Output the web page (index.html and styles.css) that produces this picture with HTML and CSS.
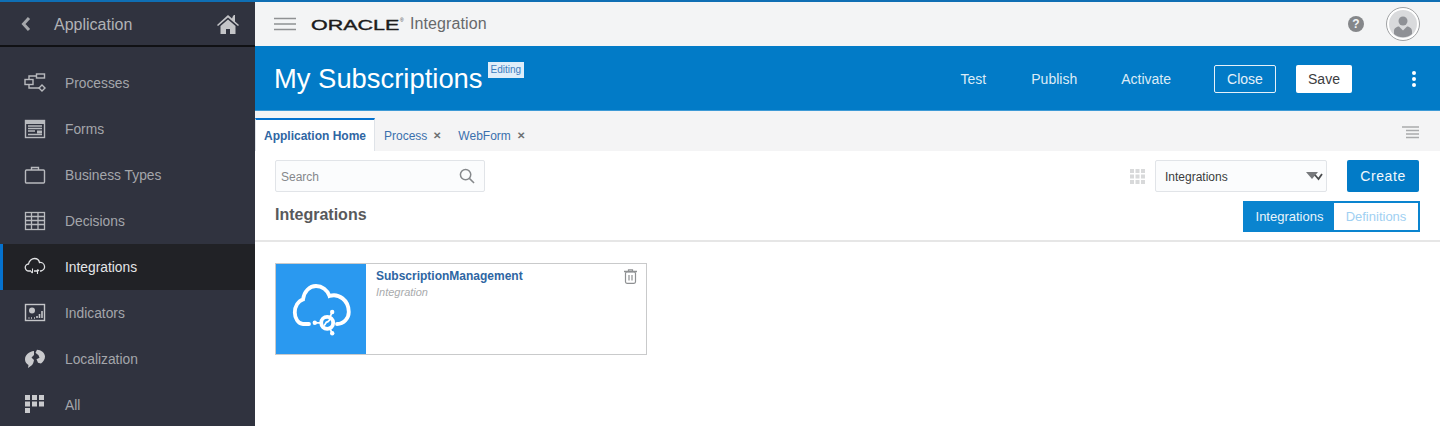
FILE: index.html
```html
<!DOCTYPE html>
<html lang="en">
<head>
<meta charset="utf-8">
<title>My Subscriptions</title>
<link rel="stylesheet" href="styles.css">
</head>
<body>
<div class="app">
  <aside class="side">
    <div class="side-head">
      <svg class="back" width="12" height="16" viewBox="0 0 12 16"><path d="M9 2 3.500 8 9 14" fill="none" stroke="#a5a7ab" stroke-width="3"/></svg>
      <span class="side-title">Application</span>
      <svg class="home" width="24" height="22" viewBox="0 0 24 22"><path d="M12 2 1 12l1 1 10-8.500L22 13l1-1-4-3.600V2h-1l-1 1-1 2.500z" fill="#c4c5c8"/><path d="M4.500 13 12 6.500 19.500 13v8H14v-5h-4v5H4.500z" fill="#c4c5c8"/></svg>
    </div>
    <nav class="nav">
      <a class="nav-item">
        <svg class="nav-ico" width="22" height="20" viewBox="0 0 22 20" fill="none" stroke="#b8babe" stroke-width="1.400"><rect x="12.500" y="1" width="8" height="4"/><rect x="1" y="6.500" width="8" height="5"/><path d="M12.500 3H5v3.500M5 11.500V15h10"/><path d="m18 12 3 3-3 3-3-3z"/></svg>
        <span>Processes</span>
      </a>
      <a class="nav-item">
        <svg class="nav-ico" width="22" height="20" viewBox="0 0 22 20" fill="none" stroke="#b8babe"><rect x="1.500" y="1.500" width="19" height="17" stroke-width="1.400"/><path d="M2 3.500h18" stroke-width="3"/><path d="M4 7h14M4 9.500h14M4 12h7M4 15.500h14" stroke-width="1.700"/><path d="M13 13h5" stroke-width="3"/></svg>
        <span>Forms</span>
      </a>
      <a class="nav-item">
        <svg class="nav-ico" width="22" height="20" viewBox="0 0 22 20" fill="none" stroke="#b8babe" stroke-width="1.400"><rect x="1.500" y="5" width="19" height="13" rx="1"/><path d="M7.500 5V2.500h7V5"/></svg>
        <span>Business Types</span>
      </a>
      <a class="nav-item">
        <svg class="nav-ico" width="22" height="20" viewBox="0 0 22 20" fill="none" stroke="#b8babe" stroke-width="1.300"><rect x="1.500" y="1.500" width="19" height="17"/><path d="M1.500 5.500h19M1.500 9.500h19M1.500 13.500h19M7.500 1.500v17M14 1.500v17"/></svg>
        <span>Decisions</span>
      </a>
      <a class="nav-item active">
        <svg class="nav-ico" width="22" height="20" viewBox="0 0 22 20" fill="none" stroke="#e0e1e3" stroke-width="1.300"><path d="M7 14H5a3.500 3.500 0 0 1-.5-7C5 3.500 8 1.500 10.500 1.500c2.500 0 4.500 1.500 5 4a4.300 4.300 0 0 1 1.500 8.500h-1M10 14h3"/><path d="M8.500 11.500V16M7 14.500l1.500 1.500M13.500 12.500V17M13.500 12.500l1.500 1.500" stroke-width="1.100"/></svg>
        <span>Integrations</span>
      </a>
      <a class="nav-item">
        <svg class="nav-ico" width="22" height="20" viewBox="0 0 22 20" fill="none" stroke="#c4c5c8"><rect x="1.500" y="1.500" width="19" height="16" stroke-width="1.400"/><circle cx="8" cy="7.500" r="3" fill="#c4c5c8" stroke="none"/><path d="M4.500 15h1M7 15h1M10 15h1M13 15v-2M15.500 15v-4M18 15V8" stroke-width="1.600"/></svg>
        <span>Indicators</span>
      </a>
      <a class="nav-item">
        <svg class="nav-ico" width="22" height="20" viewBox="0 0 22 20"><path d="M10 2C5 2.500 1 6 1 10.500c0 2.500 1.500 4.500 3.500 5.500L4 19l3.500-2.500c1.500-1 2-3 2.500-5.500l-2.500-2.500L10 6z" fill="#c9cacd"/><path d="M13 .8l-1.500 3 3 2.500 1 2.500-3 1.500 1.500 3.500 3 .8c2.500-2 4-4.500 4-7.100 0-3.500-4-6.700-8-6.700z" fill="#c9cacd"/></svg>
        <span>Localization</span>
      </a>
      <a class="nav-item">
        <svg class="nav-ico" width="22" height="20" viewBox="0 0 22 20" fill="#c9cacd"><rect x="1" y="0" width="5" height="5"/><rect x="8" y="0" width="5" height="5"/><rect x="15" y="0" width="5" height="5"/><rect x="1" y="6.500" width="5" height="5"/><rect x="8" y="6.500" width="5" height="5"/><rect x="15" y="6.500" width="5" height="5"/><rect x="1" y="13" width="5" height="5"/></svg>
        <span>All</span>
      </a>
    </nav>
  </aside>
  <main class="main">
    <header class="topbar">
      <svg class="burger" width="22" height="14" viewBox="0 0 22 14"><path d="M0 1.500h22M0 7h22M0 12.500h22" stroke="#8f9193" stroke-width="1.600"/></svg>
      <span class="brand-box"><span class="brand">ORACLE</span></span>
      <span class="reg">®</span>
      <span class="product">Integration</span>
      <span class="spacer"></span>
      <span class="help">?</span>
      <span class="avatar">
        <svg width="28" height="28" viewBox="0 0 28 28"><circle cx="14" cy="14" r="14" fill="#d9dadc"/><circle cx="14" cy="11" r="4.500" fill="#8f9196"/><path d="M5 24v-3c0-3 3-4.500 5-4.500l4 4 4-4c2 0 5 1.500 5 4.500v3a14 14 0 0 1-18 0z" fill="#8f9196"/></svg>
      </span>
    </header>
    <section class="bluebar">
      <h1 class="page-title">My Subscriptions</h1>
      <span class="editing">Editing</span>
      <span class="spacer"></span>
      <a class="act act-test">Test</a>
      <a class="act act-publish">Publish</a>
      <a class="act act-activate">Activate</a>
      <button class="btn-close">Close</button>
      <button class="btn-save">Save</button>
      <svg class="kebab" width="6" height="18" viewBox="0 0 6 18" fill="#fff"><circle cx="3" cy="3" r="2"/><circle cx="3" cy="9" r="2"/><circle cx="3" cy="15" r="2"/></svg>
    </section>
    <div class="tabs">
      <a class="tab tab-on">Application Home</a>
      <a class="tab tab-process">Process <i class="x">✕</i></a>
      <a class="tab">WebForm <i class="x">✕</i></a>
      <span class="spacer"></span>
      <svg class="tab-menu" width="17" height="14" viewBox="0 0 17 14"><path d="M0 1h17M4 4.500h13M4 8h13M4 11.500h13" stroke="#a9aaac" stroke-width="1.300"/></svg>
    </div>
    <section class="content">
      <div class="tools">
        <div class="search">
          <span class="search-ph">Search</span>
          <svg width="16" height="16" viewBox="0 0 17 17" fill="none" stroke="#85888b" stroke-width="1.600"><circle cx="7" cy="7" r="5.500"/><path d="m11 11 5 5"/></svg>
        </div>
        <span class="spacer"></span>
        <svg class="grid-ico" width="15" height="15" viewBox="0 0 15 15" fill="#d8d9da"><rect width="4" height="4"/><rect x="5.500" width="4" height="4"/><rect x="11" width="4" height="4"/><rect y="5.500" width="4" height="4"/><rect x="5.500" y="5.500" width="4" height="4"/><rect x="11" y="5.500" width="4" height="4"/><rect y="11" width="4" height="4"/><rect x="5.500" y="11" width="4" height="4"/><rect x="11" y="11" width="4" height="4"/></svg>
        <div class="select">
          <span>Integrations</span>
          <svg width="17" height="10" viewBox="0 0 17 10"><path d="M0 1h12l-6 7z" fill="#77797c"/><path d="m9 4 3.500 4L16 3" fill="none" stroke="#4a4c4e" stroke-width="1.800"/></svg>
        </div>
        <button class="btn-create">Create</button>
      </div>
      <div class="subhead">
        <h2 class="sec-title">Integrations</h2>
        <div class="seg">
          <span class="seg-on">Integrations</span>
          <span class="seg-off">Definitions</span>
        </div>
      </div>
      <div class="cards">
        <article class="card">
          <div class="card-ico">
            <svg width="60" height="56" viewBox="0 0 60 56" fill="none" stroke="#fff" stroke-width="3.800" stroke-linecap="round"><path d="M18 43H12C7 43 3.800 37 3.800 31.500 3.800 25.500 7 20 12 18.500 13 10.500 18.500 5 25 5c6 0 11.500 4 13.500 10 9-3 19.300 4 19.300 16 0 6-4.800 12-11.800 12"/><circle cx="36.200" cy="41.800" r="6"/><path d="M33.500 44c1.500-1 1-3 2.500-3s1.500-1 3-2.500" stroke-width="1.800"/><path d="M24 41.800h5.500M41 31.500l-2 4.500M41 52l-2-4.500" stroke-width="1.800"/><circle cx="23.800" cy="41.800" r="2.200" fill="#fff" stroke="none"/><circle cx="41.200" cy="31" r="2.200" fill="#fff" stroke="none"/><circle cx="41.200" cy="52.300" r="2.200" fill="#fff" stroke="none"/></svg>
          </div>
          <div class="card-body">
            <a class="card-name">SubscriptionManagement</a>
            <span class="card-type">Integration</span>
          </div>
          <svg class="trash" width="13" height="15" viewBox="0 0 13 15" fill="none" stroke="#8e9092" stroke-width="1.200"><path d="M0 2.500h13" stroke-width="1.500"/><path d="M4.500 2V.8h4V2"/><rect x="1.500" y="3" width="10" height="11.300" rx="1.500"/><path d="M5 6v5.500M8 6v5.500"/></svg>
        </article>
      </div>
    </section>
  </main>
</div>
</body>
</html>
```
FILE: styles.css
```css
* { box-sizing: border-box; }
html, body { margin: 0; height: 100%; }
body { font-family: "Liberation Sans", Arial, sans-serif; background: #fff; overflow: hidden; }
a { text-decoration: none; }
.spacer { flex: 1; }
.app { display: flex; width: 1440px; height: 426px; border-top: 2px solid #0f6fb4; overflow: hidden; }

.side { width: 255px; flex: none; background: #30333f; color: #a9abb0; }
.side-head { height: 45px; display: flex; align-items: center; padding: 0 15px 0 20px; border-bottom: 2px solid #101114; }
.back { flex: none; }
.side-title { margin-left: 22px; padding-top: 2px; font-size: 16px; color: #b0b2b6; flex: 1; }
.nav { padding-top: 13px; }
.nav-item { height: 46px; display: flex; align-items: center; padding-left: 24px; font-size: 13.800px; color: #a4a6ab; }
.nav-ico { flex: none; margin-right: 19px; }
.nav-item.active { background: #212226; color: #e4e5e6; border-left: 3px solid #0572ce; padding-left: 21px; }

.main { flex: 1; display: flex; flex-direction: column; min-width: 0; }
.topbar { height: 44px; display: flex; align-items: center; padding: 0 20px 0 19px; background: #f3f4f5; }
.burger { flex: none; margin-right: 15px; }
.brand-box { width: 89px; height: 16px; flex: none; display: block; }
.brand { display: inline-block; font-size: 15px; line-height: 16px; font-weight: 400; color: #1c1c1c; -webkit-text-stroke: .4px #1c1c1c; transform: scaleX(1.430); transform-origin: 0 50%; }
.reg { font-size: 5px; color: #444; align-self: flex-start; margin: 15px 0 0 0; width: 10px; }
.product { font-size: 16px; letter-spacing: .1px; color: #67696b; }
.help { width: 16px; height: 16px; border-radius: 50%; background: #85878a; color: #f3f4f5; font-size: 12px; font-weight: 700; line-height: 16px; text-align: center; margin-right: 22px; }
.avatar { width: 34px; height: 34px; border-radius: 50%; border: 1px solid #a0a2a4; background: #fff; display: flex; align-items: center; justify-content: center; }

.bluebar { height: 65px; display: flex; align-items: center; background: #027bc7; padding: 1px 23px 0 19px; border-bottom: 1px solid #3d9ad6; color: #fff; }
.page-title { margin: 0; font-size: 27.400px; font-weight: 400; color: #fff; }
.editing { align-self: flex-start; margin: 15px 0 0 5px; background: #dfeefa; color: #3b7cbe; font-size: 10px; line-height: 16px; padding: 0 3px; }
.act { font-size: 14px; color: #dcebf6; }
.act-test { margin-right: 45px; }
.act-publish { margin-right: 44px; }
.act-activate { margin-right: 43px; }
.btn-close { width: 62px; height: 28px; background: transparent; border: 1px solid #e6f1f9; border-radius: 2px; color: #e6f1f9; font: 14px "Liberation Sans", Arial, sans-serif; padding: 0; margin-right: 20px; }
.btn-save { width: 56px; height: 28px; background: #fff; border: 0; border-radius: 2px; color: #3c3d3f; font: 14px "Liberation Sans", Arial, sans-serif; padding: 0; margin-right: 59px; }
.kebab { flex: none; }

.tabs { height: 40px; display: flex; align-items: flex-end; background: #f4f4f5; padding-right: 21px; }
.tab { height: 33px; display: flex; align-items: center; padding: 2px 9px 0; font-size: 12px; color: #3a70ad; }
.tab-process { padding-right: 8px; }
.tab-on { width: 120px; padding: 0 8px; font-weight: 700; font-size: 12px; color: #2f66a3; background: #fff; border-top: 2px solid #0572ce; border-left: 1px solid #dfe3e8; border-right: 1px solid #dfe3e8; white-space: nowrap; }
.x { font-style: normal; font-size: 10px; color: #6d7072; margin-left: 6px; font-weight: 700; }
.tab-menu { align-self: center; margin-top: 3px; }

.content { flex: 1; background: #fff; min-height: 0; }
.tools { display: flex; align-items: center; height: 32px; margin-top: 9px; padding: 0 21px 0 20px; }
.search { width: 210px; height: 32px; display: flex; align-items: center; justify-content: space-between; border: 1px solid #e1e4e8; border-radius: 2px; background: #fbfcfd; padding: 0 9px 0 5px; }
.search-ph { font-size: 12px; color: #85888b; padding-top: 2px; }
.grid-ico { flex: none; margin-right: 10px; }
.select { width: 172px; height: 32px; display: flex; align-items: center; justify-content: space-between; border: 1px solid #e1e4e8; border-radius: 2px; background: #fbfcfd; padding: 0 3px 0 9px; font-size: 12px; color: #3b3c3e; margin-right: 20px; }
.select span { padding-top: 2px; }
.btn-create { width: 72px; height: 32px; background: #027bc7; border: 0; border-radius: 2px; color: #f2f8fc; font: 14px "Liberation Sans", Arial, sans-serif; letter-spacing: .6px; padding: 0; }
.subhead { height: 50px; display: flex; align-items: flex-start; justify-content: space-between; padding: 9px 20px 0 20px; border-bottom: 2px solid #e6e6e6; }
.sec-title { margin: 5px 0 0; font-size: 16px; font-weight: 700; color: #58595b; }
.seg { display: flex; width: 177px; height: 31px; border: 2px solid #0a84cf; font-size: 13px; }
.seg-on { width: 89px; background: #0a84cf; color: #e9f4fb; display: flex; align-items: center; justify-content: center; }
.seg-off { flex: 1; background: #fff; color: #9fd0f2; display: flex; align-items: center; justify-content: center; }

.cards { padding: 21px 20px; }
.card { width: 372px; height: 92px; display: flex; border: 1px solid #c9cacb; position: relative; }
.card-ico { width: 90px; flex: none; background: #2a99f0; display: flex; align-items: center; justify-content: center; }
.card-body { display: flex; flex-direction: column; padding: 5px 0 0 10px; }
.card-name { font-size: 12px; font-weight: 700; color: #2e66a3; line-height: 15px; }
.card-type { font-size: 11px; font-style: italic; color: #a9abad; margin-top: 1px; line-height: 14px; }
.trash { position: absolute; right: 9px; top: 5px; }
```
